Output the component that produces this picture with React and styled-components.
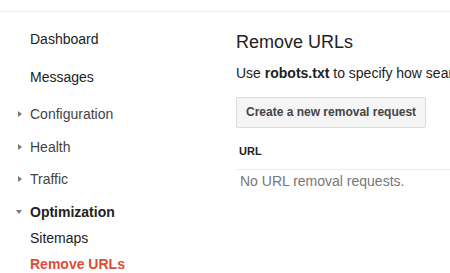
import styled, { createGlobalStyle } from 'styled-components';

const GlobalStyle = createGlobalStyle`
  html, body {
    margin: 0;
    padding: 0;
    background: #fff;
    overflow: hidden;
  }
  body {
    font-family: Arial, "Liberation Sans", sans-serif;
    color: #222;
  }
`;

const Page = styled.div`
  padding-top: 11px;
`;

const Layout = styled.div`
  display: flex;
  border-top: 1px solid #ebebeb;
`;

const Sidebar = styled.nav`
  flex: 0 0 220px;
  padding: 18px 0 0 16px;
  display: flex;
  flex-direction: column;
`;

const TopLinks = styled.div`
  display: flex;
  flex-direction: column;
  gap: 20px;
`;

const Sections = styled.div`
  display: flex;
  flex-direction: column;
  gap: 14.5px;
  margin-top: 19px;
`;

const NavRow = styled.div`
  display: flex;
  align-items: center;
  height: 18px;
  font-size: 14px;
  line-height: 18px;
  white-space: nowrap;
  color: ${(p) => (p.$active ? '#dd4b39' : p.$muted ? '#444' : '#222')};
  font-weight: ${(p) => (p.$bold ? 'bold' : 'normal')};
`;

const ArrowSlot = styled.span`
  flex: 0 0 14px;
  display: flex;
  align-items: center;
`;

const RightArrow = styled.span`
  margin-left: 2px;
  width: 0;
  height: 0;
  border-left: 4px solid #777;
  border-top: 3.5px solid transparent;
  border-bottom: 3.5px solid transparent;
`;

const DownArrow = styled.span`
  margin-top: 1px;
  width: 0;
  height: 0;
  border-top: 4px solid #777;
  border-left: 3.5px solid transparent;
  border-right: 3.5px solid transparent;
`;

const SubList = styled.div`
  display: flex;
  flex-direction: column;
  gap: 8px;
  margin-top: 8px;
  padding-left: 14px;
`;

const Main = styled.main`
  flex: 1;
  min-width: 0;
  overflow: hidden;
  padding-top: 19px;
`;

const Title = styled.h1`
  margin: 0;
  font-size: 18px;
  font-weight: normal;
  line-height: 22px;
  color: #222;
`;

const Intro = styled.p`
  margin: 11px 0 0;
  font-size: 14px;
  line-height: 18px;
  white-space: nowrap;
  color: #222;

  b {
    font-weight: bold;
  }
`;

const Button = styled.button`
  margin-top: 15px;
  height: 31px;
  box-sizing: border-box;
  padding: 0 9px;
  border: 1px solid #dcdcdc;
  border-radius: 2px;
  background: #f5f5f5;
  color: #444;
  font-family: Arial, "Liberation Sans", sans-serif;
  font-size: 12px;
  font-weight: bold;
  line-height: 29px;
  white-space: nowrap;
  cursor: default;
`;

const Table = styled.div`
  margin-top: 8px;
`;

const HeadCell = styled.div`
  padding: 8px 3px 11px;
  font-size: 11px;
  font-weight: bold;
  line-height: 14px;
  color: #222;
  border-bottom: 1px solid #ebebeb;
`;

const EmptyCell = styled.div`
  padding: 2px 4px;
  font-size: 14px;
  line-height: 18px;
  color: #777;
`;

const sections = ['Configuration', 'Health', 'Traffic'];

const App = () => {
  return (
    <Page>
      <GlobalStyle />
      <Layout>
        <Sidebar>
          <TopLinks>
            <NavRow>
              <ArrowSlot />
              Dashboard
            </NavRow>
            <NavRow>
              <ArrowSlot />
              Messages
            </NavRow>
          </TopLinks>
          <Sections>
            {sections.map((name) => (
              <NavRow key={name} $muted>
                <ArrowSlot>
                  <RightArrow />
                </ArrowSlot>
                {name}
              </NavRow>
            ))}
            <div>
              <NavRow $bold>
                <ArrowSlot>
                  <DownArrow />
                </ArrowSlot>
                Optimization
              </NavRow>
              <SubList>
                <NavRow>Sitemaps</NavRow>
                <NavRow $active $bold>
                  Remove URLs
                </NavRow>
              </SubList>
            </div>
          </Sections>
        </Sidebar>
        <Main>
          <Title>Remove URLs</Title>
          <Intro>
            Use <b>robots.txt</b> to specify how search engines should crawl
            your site, or request removal of URLs from Google search results.
          </Intro>
          <Button>Create a new removal request</Button>
          <Table>
            <HeadCell>URL</HeadCell>
            <EmptyCell>No URL removal requests.</EmptyCell>
          </Table>
        </Main>
      </Layout>
    </Page>
  );
};

export default App;
